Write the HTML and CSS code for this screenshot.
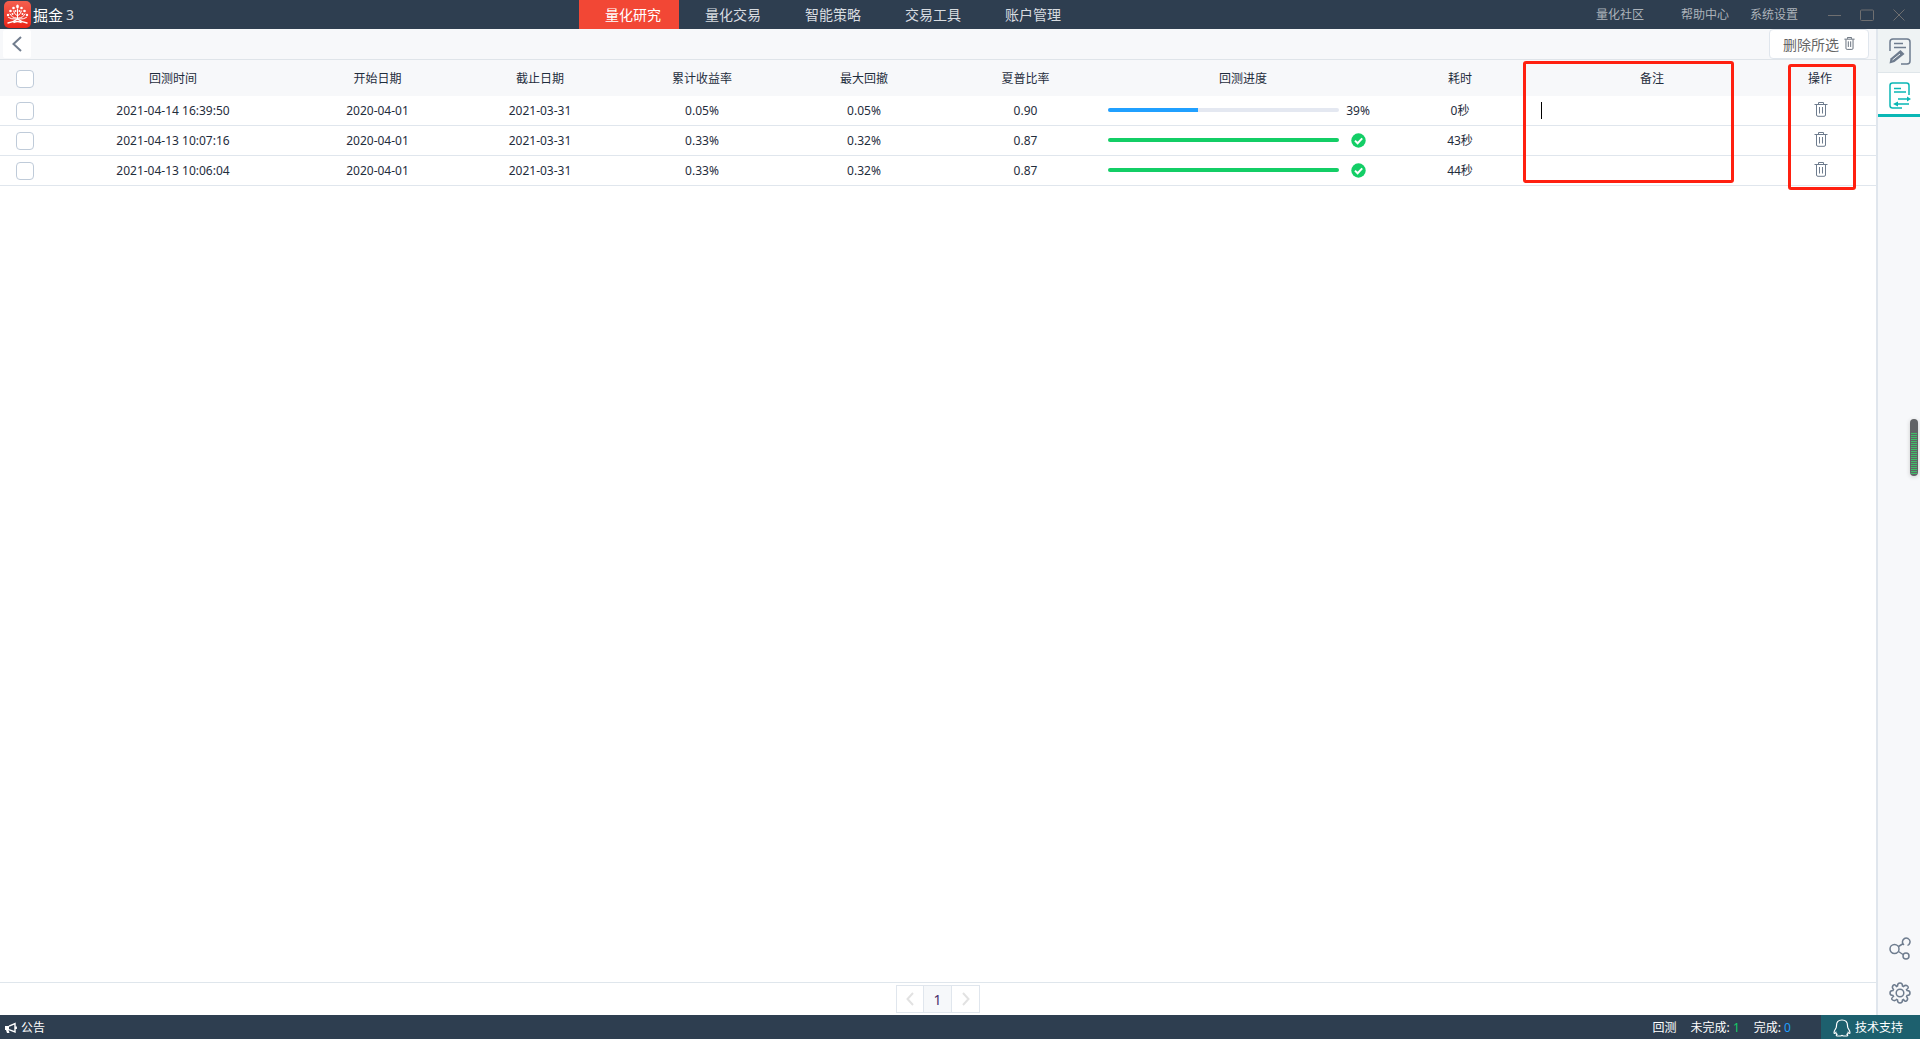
FILE: index.html
```html
<!DOCTYPE html>
<html lang="zh-CN">
<head>
<meta charset="utf-8">
<title>掘金3</title>
<link rel="stylesheet" href="styles.css">
</head>
<body>
<svg class="defs" aria-hidden="true">
  <symbol id="trash" viewBox="0 0 14 15"><path d="M0.5 2.5H13.5M4.5 2V0.5H9.5V2M2.5 3V13Q2.5 14.3 4 14.3H10Q11.5 14.3 11.5 13V3M5.5 5V11.5M8.5 5V11.5" fill="none" stroke="currentColor"/></symbol>
  <symbol id="done" viewBox="0 0 15 15"><circle cx="7.5" cy="7.5" r="7.2" fill="#13ce66"/><path d="M4 7.6L6.6 10.2L11.2 5.4" fill="none" stroke="#fff" stroke-width="2"/></symbol>
</svg>
<header class="topbar">
  <div class="brand">
    <svg width="27" height="27" viewBox="0 0 27 27" aria-hidden="true">
      <defs><linearGradient id="red" x1="0" y1="0" x2="0" y2="1"><stop offset="0" stop-color="#f4604f"/><stop offset="1" stop-color="#ea2418"/></linearGradient></defs>
      <rect width="27" height="27" rx="5" fill="url(#red)"/>
      <g fill="none" stroke="#fff" stroke-width="1" stroke-linecap="round">
        <path d="M13.5 8V18M13.500 15Q10 13 9.500 10M13.500 15Q17 13 17.500 10M12.500 17Q8 17 6 13M14.500 17Q19 17 21 13M12.500 18Q7 18.500 4.500 16.500M14.500 18Q20 18.500 22.500 16.500"/>
        <path d="M4 22Q9 21.500 12.500 18.500Q13.500 17.500 14.500 18.500Q18 21.500 23 22M10 21.500Q13.500 19.500 17 21.500" stroke-width="1.400"/>
      </g>
      <g fill="#fff"><ellipse cx="13.500" cy="5.500" rx="1.300" ry="2"/><circle cx="9.500" cy="7" r="1.300"/><circle cx="17.500" cy="7" r="1.300"/><circle cx="6.500" cy="10" r="1.300"/><circle cx="20.500" cy="10" r="1.300"/><circle cx="4" cy="14" r="1.200"/><circle cx="23" cy="14" r="1.200"/><circle cx="11.500" cy="10" r="1"/><circle cx="15.500" cy="10" r="1"/><circle cx="8.500" cy="13" r="1"/><circle cx="18.500" cy="13" r="1"/></g>
    </svg>
    <span class="brand-name">掘金</span><span class="brand-ver">3</span>
  </div>
  <nav class="tabs">
    <a class="tab tab-active" href="#">量化研究</a>
    <a class="tab" href="#">量化交易</a>
    <a class="tab" href="#">智能策略</a>
    <a class="tab" href="#">交易工具</a>
    <a class="tab" href="#">账户管理</a>
  </nav>
  <div class="links">
    <a class="link link-wide" href="#">量化社区</a>
    <a class="link" href="#">帮助中心</a>
    <a class="link" href="#">系统设置</a>
  </div>
  <div class="window-controls">
    <button aria-label="最小化"><svg width="14" height="12"><path d="M0 6.500H13" stroke="#6f6f70"/></svg></button>
    <button aria-label="最大化"><svg width="14" height="12"><rect x="0.500" y="1" width="13" height="10.500" rx="1" fill="none" stroke="#6f6f70"/></svg></button>
    <button aria-label="关闭"><svg width="14" height="12"><path d="M1.500 0.500L12.500 11.500M12.500 0.500L1.500 11.500" stroke="#6f6f70"/></svg></button>
  </div>
</header>
<div class="workspace">
  <main class="main">
    <div class="toolbar">
      <button class="back" aria-label="返回"><svg width="12" height="16"><path d="M10 1L2.500 8L10 15" fill="none" stroke="#717d8e" stroke-width="2"/></svg></button>
      <button class="delete-selected">删除所选<svg width="11" height="13" viewBox="0 0 14 15" preserveAspectRatio="none"><use href="#trash"/></svg></button>
    </div>
    <div class="table-area">
      <table class="runs">
        <colgroup><col class="c-check"><col class="c-time"><col class="c-start"><col class="c-date"><col class="c-date"><col class="c-date"><col class="c-sharpe"><col class="c-progress"><col class="c-cost"><col class="c-note"><col class="c-op"></colgroup>
        <thead>
          <tr>
            <th><input class="check" type="checkbox" aria-label="全选"></th>
            <th>回测时间</th><th>开始日期</th><th>截止日期</th><th>累计收益率</th><th>最大回撤</th><th>夏普比率</th><th>回测进度</th><th>耗时</th>
            <th class="marked">备注<span class="mark mark-note"></span></th>
            <th class="marked">操作<span class="mark mark-op"></span></th>
          </tr>
        </thead>
        <tbody>
          <tr>
            <td><input class="check" type="checkbox" aria-label="选择"></td>
            <td>2021-04-14 16:39:50</td><td>2020-04-01</td><td>2021-03-31</td><td>0.05%</td><td>0.05%</td><td>0.90</td>
            <td><div class="progress"><div class="track"><div class="fill" style="width:39%"></div></div><span class="status">39%</span></div></td>
            <td>0秒</td>
            <td class="note-cell"><input class="note note-editing" type="text" aria-label="备注"></td>
            <td><button class="row-delete" aria-label="删除"><svg width="14" height="15"><use href="#trash"/></svg></button></td>
          </tr>
          <tr>
            <td><input class="check" type="checkbox" aria-label="选择"></td>
            <td>2021-04-13 10:07:16</td><td>2020-04-01</td><td>2021-03-31</td><td>0.33%</td><td>0.32%</td><td>0.87</td>
            <td><div class="progress"><div class="track"><div class="fill fill-done" style="width:100%"></div></div><span class="status status-done"><svg width="15" height="15"><use href="#done"/></svg></span></div></td>
            <td>43秒</td>
            <td class="note-cell"><input class="note" type="text" aria-label="备注"></td>
            <td><button class="row-delete" aria-label="删除"><svg width="14" height="15"><use href="#trash"/></svg></button></td>
          </tr>
          <tr>
            <td><input class="check" type="checkbox" aria-label="选择"></td>
            <td>2021-04-13 10:06:04</td><td>2020-04-01</td><td>2021-03-31</td><td>0.33%</td><td>0.32%</td><td>0.87</td>
            <td><div class="progress"><div class="track"><div class="fill fill-done" style="width:100%"></div></div><span class="status status-done"><svg width="15" height="15"><use href="#done"/></svg></span></div></td>
            <td>44秒</td>
            <td class="note-cell"><input class="note" type="text" aria-label="备注"></td>
            <td><button class="row-delete" aria-label="删除"><svg width="14" height="15"><use href="#trash"/></svg></button></td>
          </tr>
        </tbody>
      </table>
    </div>
    <div class="pager">
      <button class="page" aria-label="上一页"><svg width="8" height="14"><path d="M7 1L1.500 7L7 13" fill="none" stroke="#e2e2e2" stroke-width="2"/></svg></button>
      <button class="page page-current">1</button>
      <button class="page" aria-label="下一页"><svg width="8" height="14"><path d="M1 1L6.500 7L1 13" fill="none" stroke="#e2e2e2" stroke-width="2"/></svg></button>
    </div>
  </main>
  <aside class="sidebar">
    <button class="side-item" aria-label="编辑策略"><svg width="22" height="27" viewBox="0 0 22 27" fill="none" stroke="#6e7c8e" stroke-width="1.500">
      <path d="M1 13V4Q1 1 4 1H18Q21 1 21 4V23Q21 26 18 26H12M5 5.500H14M5 9.500H17"/><path d="M0.500 25.500L1.500 20.500L11.500 12L15.500 16L5.500 24Z" fill="#6e7c8e" stroke="none"/><path d="M3.500 22L11 16" stroke="#eff3f4" stroke-width="1"/></svg></button>
    <button class="side-item side-active" aria-label="回测记录"><svg width="22" height="27" viewBox="0 0 22 27" fill="none" stroke="#0ab7b5" stroke-width="1.500">
      <path d="M20 13V3.500Q20 1 17.500 1H3.500Q1 1 1 3.500V23.500Q1 26 3.500 26H13M5 6.500H12M5 10H17M9 17H20M6 22H20"/><path d="M18 14.500L22 17L18 19.500ZM9 19.500L4 22L9 24.500Z" fill="#0ab7b5" stroke="none"/></svg></button>
    <div class="side-bottom">
      <button class="side-tool" aria-label="分享"><svg width="22" height="23" viewBox="0 0 22 23" fill="none" stroke="#6e7c8e" stroke-width="1.500">
        <circle cx="5.500" cy="12" r="4.500"/><path d="M15 8Q12.500 6 14 3Q16 0 19 1.500Q22.500 4 20 7.500L18.500 8.500M9.500 9.500L13.500 7M9.500 14.500L14 17.500"/><circle cx="17" cy="19" r="3"/></svg></button>
      <button class="side-tool" aria-label="设置"><svg width="22" height="22" viewBox="0 0 22 22" fill="none" stroke="#6e7c8e" stroke-width="1.500">
        <path d="M8.500 4Q8.500 1 11 1T13.500 4L14.500 4.500Q16.500 2.500 18.500 4T17.500 7.500L18 8.500Q21 8.500 21 11T18 13.500L17.500 14.500Q19.500 16.500 18 18.500T14.500 17.500L13.500 18Q13.500 21 11 21T8.500 18L7.500 17.500Q5.500 19.500 3.500 18T4.500 14.500L4 13.500Q1 13.500 1 11T4 8.500L4.500 7.500Q2.500 5.500 4 3.500T7.500 4.500Z"/><circle cx="11" cy="11" r="3.800"/></svg></button>
    </div>
    <div class="meter"><div class="meter-fill"></div></div>
  </aside>
</div>
<footer class="statusbar">
  <a class="notice" href="#"><svg width="13" height="12" viewBox="0 0 13 12"><path d="M1 4H5V8H4.500L5.500 11H3L2 8H1Z" fill="#fff"/><path d="M5 4.200L11 1.500V10L5 7.600M12.200 4.500V7" fill="none" stroke="#fff" stroke-width="1.400"/></svg>公告</a>
  <div class="counts">
    <span>回测</span>
    <span>未完成: <span class="pending">1</span></span>
    <span>完成: <span class="finished">0</span></span>
  </div>
  <a class="support" href="#"><svg width="18" height="18" viewBox="0 0 18 18" fill="none" stroke="#fff" stroke-width="1.200"><path d="M3.500 6.500Q3.500 1 9 1T14.500 6.500Q14.500 8 15 9Q17.500 13 16.800 14.300Q16 14.500 15.200 13.500Q15 14.500 14 15.300Q15.500 16.500 14 17H10.500L9 16.500L7.500 17H4Q2.500 16.500 4 15.300Q3 14.500 2.800 13.500Q2 14.500 1.200 14.300Q0.500 13 3 9Q3.500 8 3.500 6.500Z"/></svg>技术支持</a>
</footer>
</body>
</html>
```
FILE: styles.css
```css
* { box-sizing: border-box; }
body {
  margin: 0;
  min-height: 100vh;
  display: flex;
  flex-direction: column;
  background: #fff;
  color: #1f2d3d;
  font: 12px/18px "Noto Sans", "Noto Sans CJK SC", sans-serif;
}
button, input { font: inherit; color: inherit; margin: 0; padding: 0; border: 0; background: none; }
a { color: inherit; text-decoration: none; }
svg { display: block; flex: none; }
.defs { position: absolute; width: 0; height: 0; }

.topbar { display: flex; height: 29px; background: #2e3e50; color: #fff; }
.brand { flex: 0 0 579px; display: flex; align-items: center; padding-left: 4px; }
.brand-name { margin-left: 2px; font-size: 15px; }
.brand-ver { margin-left: 3px; font-size: 14px; color: #d5d9dd; }
.tabs { display: flex; }
.tab { width: 100px; padding-left: 26px; font-size: 14px; line-height: 29px; color: #d8dce0; }
.tab-active { background: #f24735; color: #fff; }
.links { display: flex; gap: 21px; margin-left: auto; line-height: 29px; color: #acb3ba; }
.link-wide { margin-right: 16px; }
.window-controls { display: flex; align-items: center; gap: 18px; padding: 0 14px 0 30px; }

.workspace { flex: 1; display: flex; }
.main { flex: 1; display: flex; flex-direction: column; border-right: 2px solid #e0e6ed; }
.toolbar {
  display: flex; justify-content: space-between; align-items: center;
  height: 31px; padding: 0 7px 0 3px;
  background: #f7f8fa; border-bottom: 1px solid #dfe4e9;
}
.back { display: flex; align-items: center; justify-content: center; width: 28px; height: 28px; border-radius: 2px; background: #fff; }
.delete-selected {
  display: flex; align-items: center; gap: 5px;
  height: 30px; padding: 1px 13px 0;
  border: 1px solid #e0e6ed; border-radius: 4px; background: #fff;
  font-size: 14px; color: #666;
}
.delete-selected svg { margin-bottom: 2px; color: #4a5563; }

.table-area { flex: 1; }
.runs { width: 100%; table-layout: fixed; border-collapse: separate; border-spacing: 0; text-align: center; }
.c-check { width: 50px; }
.c-time { width: 246px; }
.c-start { width: 163px; }
.c-date { width: 162px; }
.c-sharpe { width: 161px; }
.c-progress { width: 274px; }
.c-cost { width: 160px; }
.c-note { width: 224px; }
.c-op { width: 112px; }
th { height: 36px; padding: 2px 0 0; font-weight: 400; background: #f7f8fa; }
td { height: 30px; padding: 0; border-bottom: 1px solid #e0e6ed; }
.check {
  display: block; appearance: none; width: 18px; height: 18px; margin: 0 auto;
  border: 1px solid #bfcbd9; border-radius: 4px; background: #fff;
}
.progress { display: flex; align-items: center; padding-left: 2px; }
.track { flex: 0 0 85%; height: 4px; margin-bottom: 2px; border-radius: 2px; background: #e4e8f1; overflow: hidden; }
.fill { height: 4px; background: #20a0ff; }
.fill-done { background: #13ce66; }
.status { margin-left: 7px; }
.status-done { margin-left: 12px; padding-bottom: 1px; }
.note-cell { text-align: left; }
.note { display: block; width: 180px; height: 17px; margin-left: 1px; outline: 0; }
.note-editing { border-left: 1px solid #000; }
.row-delete { display: block; margin: 0 auto; padding: 0 0 3px 1px; color: #6e7c8e; }
.marked { position: relative; }
.mark { position: absolute; z-index: 1; border: 3px solid #ff2010; border-radius: 3px; pointer-events: none; }
.mark-note { top: 1px; left: -17px; right: 30px; height: 122px; }
.mark-op { top: 4px; left: 24px; right: 20px; height: 126px; }

.pager { display: flex; justify-content: center; padding: 2px 0; border-top: 1px solid #dfe6ec; }
.page { display: flex; align-items: center; justify-content: center; width: 28px; height: 28px; border: 1px solid #e0e6ed; }
.page + .page { border-left: 0; }
.page-current { padding-top: 2px; background: #f6f8fa; font-size: 14px; color: #48306a; }

.sidebar { position: relative; flex: 0 0 42px; display: flex; flex-direction: column; background: #f7f8fa; }
.side-item { display: flex; align-items: center; justify-content: center; height: 44px; padding: 1px 0 0 2px; background: #eff3f4; border-bottom: 1px solid #dfe6ea; }
.side-active { padding-top: 3px; background: #fff; border-bottom: 3px solid #0ab7b5; }
.side-bottom { display: flex; flex-direction: column; gap: 22px; margin-top: auto; padding-bottom: 11px; }
.side-tool { display: flex; justify-content: center; padding-left: 2px; }
.meter { position: absolute; right: 2px; top: 390px; width: 8px; height: 57px; padding: 14px 1px 2px; border-radius: 4px; background: #616366; box-shadow: 0 1px 4px #ccc; }
.meter-fill { height: 100%; background: repeating-linear-gradient(#3fbf68 0 1px, #616366 1px 2px); }

.statusbar { display: flex; align-items: center; height: 24px; background: #2e3e50; color: #fff; }
.notice { display: flex; align-items: center; gap: 4px; padding: 2px 0 0 4px; }
.counts { display: flex; gap: 14px; margin-left: auto; padding: 2px 30px 0 0; }
.pending { color: #13ce66; }
.finished { color: #20a0ff; }
.support { display: flex; align-items: center; gap: 4px; height: 24px; padding: 1px 17px 0 12px; background: #1d606e; }
```
